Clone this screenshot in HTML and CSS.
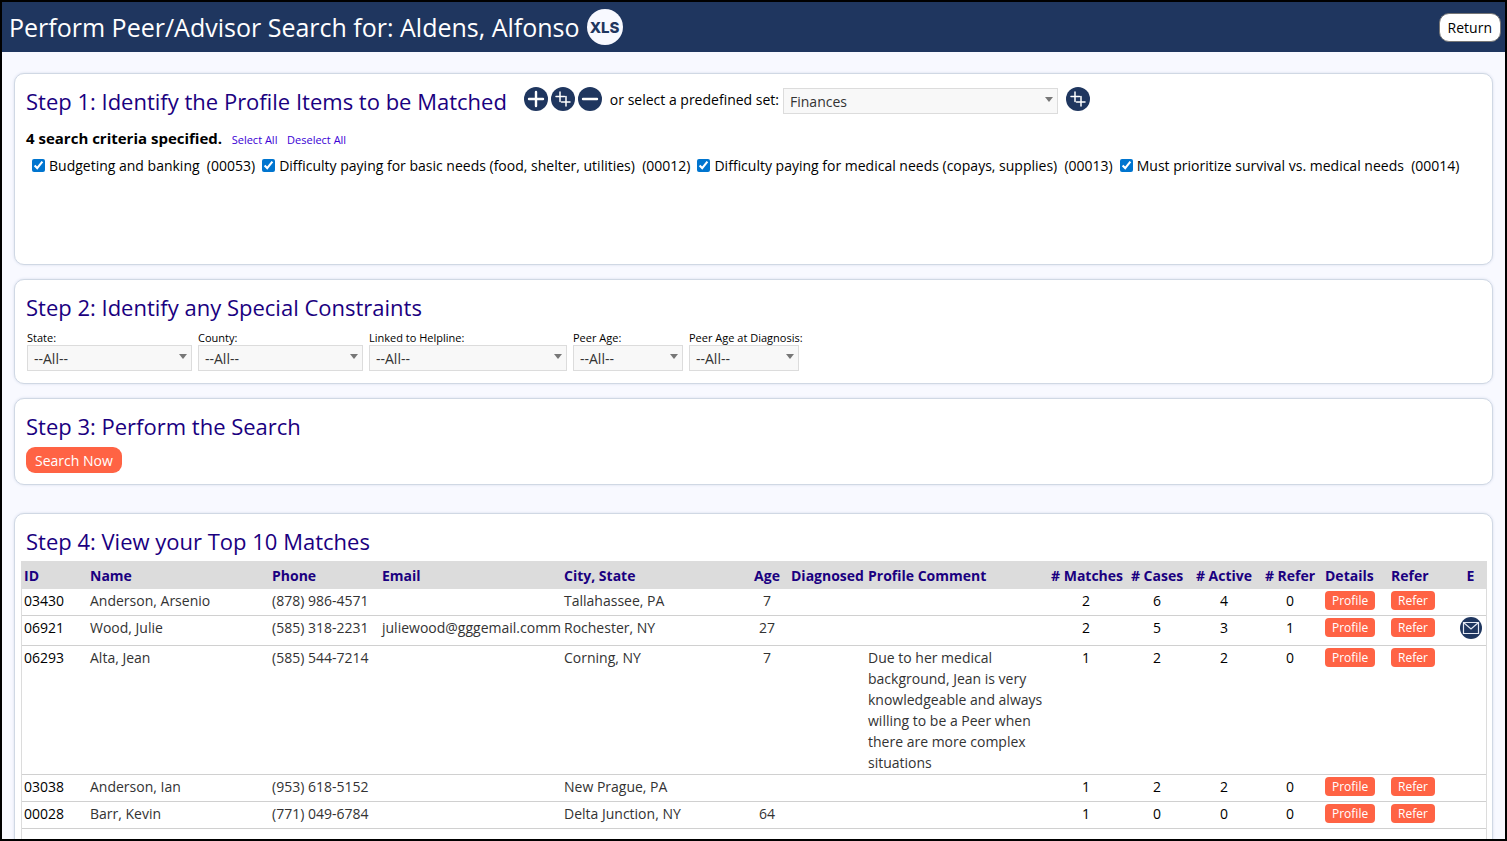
FILE: index.html
```
<!DOCTYPE html>
<html lang="en">

<head>
  <meta charset="UTF-8">
  <title>Perform Peer/Advisor Search</title>
  <link rel="stylesheet" href="styles.css">
</head>

<body>

  <!-- shared icons -->
  <svg class="sprite" aria-hidden="true">
    <symbol id="icon-plus" viewBox="0 0 24 24">
      <circle cx="12" cy="12" r="12" fill="#1f365f" />
      <path d="M12 5v14M5 12h14" stroke="#fff" stroke-width="2.4" stroke-linecap="round" />
    </symbol>
    <symbol id="icon-double" viewBox="0 0 24 24">
      <circle cx="12" cy="12" r="12" fill="#1f365f" />
      <path d="M9 5v9.500M5 9.500h8.500M15 9.500v9.500M10.500 15h8.500" stroke="#fff" stroke-width="1.5" stroke-linecap="round" />
    </symbol>
    <symbol id="icon-minus" viewBox="0 0 24 24">
      <circle cx="12" cy="12" r="12" fill="#1f365f" />
      <path d="M5 12h14" stroke="#fff" stroke-width="2.4" stroke-linecap="round" />
    </symbol>
    <symbol id="icon-mail" viewBox="0 0 22 22">
      <circle cx="11" cy="11" r="11" fill="#1f365f" />
      <path d="M3.500 5.500h15v11h-15zM3.500 5.500l7.500 6.500l7.500-6.500" stroke="#e4e8f2" stroke-width="1.2" fill="none" />
    </symbol>
  </svg>

  <div class="page">

    <header class="topbar">
      <h1>Perform Peer/Advisor Search for: Aldens, Alfonso</h1>
      <button class="xls" type="button">XLS</button>
      <button class="return" type="button">Return</button>
    </header>

    <main>

      <section class="card card-items">
        <div class="title-row">
          <h2>Step 1: Identify the Profile Items to be Matched</h2>
          <div class="icons">
            <button class="icon" type="button" aria-label="Add item"><svg><use href="#icon-plus" /></svg></button>
            <button class="icon" type="button" aria-label="Add several items"><svg><use href="#icon-double" /></svg></button>
            <button class="icon" type="button" aria-label="Remove items"><svg><use href="#icon-minus" /></svg></button>
          </div>
          <label for="predefined">or select a predefined set:</label>
          <span class="select set"><select id="predefined"><option>Finances</option></select></span>
          <button class="icon" type="button" aria-label="Add set"><svg><use href="#icon-double" /></svg></button>
        </div>
        <p class="criteria"><strong>4 search criteria specified.</strong> <a href="#">Select All</a> <a href="#">Deselect All</a></p>
        <div class="checks">
          <label><input type="checkbox" checked>Budgeting and banking&nbsp; (00053)</label>
          <label><input type="checkbox" checked>Difficulty paying for basic needs (food, shelter, utilities)&nbsp; (00012)</label>
          <label><input type="checkbox" checked>Difficulty paying for medical needs (copays, supplies)&nbsp; (00013)</label>
          <label><input type="checkbox" checked>Must prioritize survival vs. medical needs&nbsp; (00014)</label>
        </div>
      </section>

      <section class="card">
        <h2>Step 2: Identify any Special Constraints</h2>
        <div class="filters">
          <div class="filter medium">
            <label for="state">State:</label>
            <span class="select"><select id="state"><option>--All--</option></select></span>
          </div>
          <div class="filter medium">
            <label for="county">County:</label>
            <span class="select"><select id="county"><option>--All--</option></select></span>
          </div>
          <div class="filter wide">
            <label for="helpline">Linked to Helpline:</label>
            <span class="select"><select id="helpline"><option>--All--</option></select></span>
          </div>
          <div class="filter narrow">
            <label for="age">Peer Age:</label>
            <span class="select"><select id="age"><option>--All--</option></select></span>
          </div>
          <div class="filter narrow">
            <label for="ageDiagnosis">Peer Age at Diagnosis:</label>
            <span class="select"><select id="ageDiagnosis"><option>--All--</option></select></span>
          </div>
        </div>
      </section>

      <section class="card card-search">
        <h2>Step 3: Perform the Search</h2>
        <button class="search" type="button">Search Now</button>
      </section>

      <section class="card card-results">
        <h2>Step 4: View your Top 10 Matches</h2>
        <table class="results">
          <colgroup>
            <col class="c-id">
            <col class="c-name">
            <col class="c-phone">
            <col class="c-email">
            <col class="c-city">
            <col class="c-age">
            <col class="c-diag">
            <col class="c-comment">
            <col class="c-matches">
            <col class="c-cases">
            <col class="c-count">
            <col class="c-count">
            <col class="c-action">
            <col class="c-action">
            <col class="c-mail">
          </colgroup>
          <thead>
            <tr>
              <th>ID</th>
              <th>Name</th>
              <th>Phone</th>
              <th>Email</th>
              <th>City, State</th>
              <th class="num">Age</th>
              <th class="tight">Diagnosed</th>
              <th>Profile Comment</th>
              <th class="num"># Matches</th>
              <th class="num"># Cases</th>
              <th class="num"># Active</th>
              <th class="num"># Refer</th>
              <th>Details</th>
              <th>Refer</th>
              <th class="num">E</th>
            </tr>
          </thead>
          <tbody>
            <tr>
              <td class="dark">03430</td>
              <td>Anderson, Arsenio</td>
              <td>(878) 986-4571</td>
              <td></td>
              <td>Tallahassee, PA</td>
              <td class="num">7</td>
              <td></td>
              <td></td>
              <td class="num dark">2</td>
              <td class="num dark">6</td>
              <td class="num dark">4</td>
              <td class="num dark">0</td>
              <td><button class="small" type="button">Profile</button></td>
              <td><button class="small" type="button">Refer</button></td>
              <td></td>
            </tr>
            <tr class="has-mail">
              <td class="dark">06921</td>
              <td>Wood, Julie</td>
              <td>(585) 318-2231</td>
              <td class="email">juliewood@gggemail.comm</td>
              <td>Rochester, NY</td>
              <td class="num">27</td>
              <td></td>
              <td></td>
              <td class="num dark">2</td>
              <td class="num dark">5</td>
              <td class="num dark">3</td>
              <td class="num dark">1</td>
              <td><button class="small" type="button">Profile</button></td>
              <td><button class="small" type="button">Refer</button></td>
              <td class="num"><button class="icon mail" type="button" aria-label="Send email"><svg><use href="#icon-mail" /></svg></button></td>
            </tr>
            <tr>
              <td class="dark">06293</td>
              <td>Alta, Jean</td>
              <td>(585) 544-7214</td>
              <td></td>
              <td>Corning, NY</td>
              <td class="num">7</td>
              <td></td>
              <td>Due to her medical background, Jean is very knowledgeable and always willing to be a Peer when there are more complex situations</td>
              <td class="num dark">1</td>
              <td class="num dark">2</td>
              <td class="num dark">2</td>
              <td class="num dark">0</td>
              <td><button class="small" type="button">Profile</button></td>
              <td><button class="small" type="button">Refer</button></td>
              <td></td>
            </tr>
            <tr>
              <td class="dark">03038</td>
              <td>Anderson, Ian</td>
              <td>(953) 618-5152</td>
              <td></td>
              <td>New Prague, PA</td>
              <td class="num"></td>
              <td></td>
              <td></td>
              <td class="num dark">1</td>
              <td class="num dark">2</td>
              <td class="num dark">2</td>
              <td class="num dark">0</td>
              <td><button class="small" type="button">Profile</button></td>
              <td><button class="small" type="button">Refer</button></td>
              <td></td>
            </tr>
            <tr>
              <td class="dark">00028</td>
              <td>Barr, Kevin</td>
              <td>(771) 049-6784</td>
              <td></td>
              <td>Delta Junction, NY</td>
              <td class="num">64</td>
              <td></td>
              <td></td>
              <td class="num dark">1</td>
              <td class="num dark">0</td>
              <td class="num dark">0</td>
              <td class="num dark">0</td>
              <td><button class="small" type="button">Profile</button></td>
              <td><button class="small" type="button">Refer</button></td>
              <td></td>
            </tr>
            <tr>
              <td colspan="15"></td>
            </tr>
          </tbody>
        </table>
      </section>

    </main>

  </div>

</body>

</html>
```
FILE: styles.css
```
* {
  box-sizing: border-box;
}

body {
  margin: 0;
  font-family: "Open Sans", "Noto Sans", sans-serif;
  font-size: 14px;
  line-height: 21px;
  color: #000;
}

button,
select {
  font-family: inherit;
  font-size: 14px;
}

button {
  padding: 0;
  cursor: pointer;
}

.sprite {
  display: none;
}

.page {
  height: 100vh;
  overflow: hidden;
  border: 2px solid #000;
  background: #f8f9ff;
}

/* top bar */
.topbar {
  display: flex;
  align-items: center;
  gap: 7px;
  height: 50px;
  padding: 0 4px 0 7px;
  background: #1f365f;
}

.topbar h1 {
  margin: 0;
  font-size: 25px;
  font-weight: 400;
  line-height: 34px;
  color: #fff;
}

.xls {
  width: 36px;
  height: 36px;
  border: 0;
  border-radius: 50%;
  background: #f8f9ff;
  color: #1f365f;
  font-family: Inter, sans-serif;
  font-size: 15px;
  font-weight: 800;
}

.return {
  height: 29px;
  margin-left: auto;
  padding: 0 8px;
  border: 1px solid #767676;
  border-radius: 10px;
  background: #fff;
  color: #000;
}

/* step cards */
main {
  padding: 21px 12px;
}

.card {
  margin-bottom: 14px;
  padding: 11px 11px 12px;
  border: 1px solid #d0d8e4;
  border-radius: 10px;
  background: #fff;
  box-shadow: 0 0 3px #d8deec;
}

.card h2 {
  margin: 0;
  font-size: 22px;
  font-weight: 400;
  line-height: 32px;
  color: #1a0080;
}

.card-items {
  min-height: 192px;
}

.card-search {
  margin-bottom: 28px;
  padding-bottom: 11px;
}

.title-row {
  display: flex;
  align-items: center;
}

.icons {
  display: flex;
  gap: 3px;
  margin: 0 8px 4px 17px;
}

.icon {
  width: 24px;
  height: 24px;
  border: 0;
  background: none;
}

.icon svg {
  display: block;
  width: 100%;
  height: 100%;
}

.title-row label,
.title-row > .icon {
  margin-bottom: 4px;
}

.select {
  position: relative;
  display: block;
}

.select select {
  appearance: none;
  display: block;
  width: 100%;
  height: 26px;
  padding: 0 20px 0 6px;
  border: 1px solid #dcdcdc;
  border-radius: 0;
  background: #f8f8f8;
  color: #333;
}

/* drop-down arrow */
.select::after {
  content: "";
  position: absolute;
  top: 9px;
  right: 5px;
  border: 4px solid transparent;
  border-top: 5px solid #777;
  border-bottom: 0;
  pointer-events: none;
}

.set {
  width: 275px;
  margin: 0 8px 0 4px;
}

.criteria {
  margin: 11px 0 5px;
}

.criteria strong {
  font-size: 15px;
}

.criteria a {
  margin-left: 6px;
  font-size: 11px;
  color: #3a00d5;
  text-decoration: none;
}

.checks {
  display: flex;
  flex-wrap: wrap;
  gap: 0 7px;
  padding-left: 6px;
}

.checks label {
  display: flex;
  align-items: center;
  gap: 4px;
}

.checks input {
  width: 13px;
  height: 13px;
  margin: 0;
  accent-color: #0075cf;
}

.filters {
  display: flex;
  gap: 6px;
  margin-left: 1px;
}

.filter label {
  display: block;
  padding-top: 7px;
  font-size: 11px;
  line-height: 15px;
  white-space: nowrap;
}

.medium {
  width: 165px;
}

.wide {
  width: 198px;
}

.narrow {
  width: 110px;
}

.search {
  display: block;
  height: 26px;
  margin-top: 5px;
  padding: 0 9px;
  border: 0;
  border-radius: 9px;
  background: #ff6344;
  color: #fff;
}

/* matches table */
.card-results {
  padding: 11px 5px 12px 6px;
}

.card-results h2 {
  padding-left: 5px;
}

.results {
  width: 100%;
  margin-top: 4px;
  table-layout: fixed;
  border-collapse: separate;
  border-spacing: 0;
  border: 1px solid #dcdcdc;
  border-top: 0;
}

.results th {
  height: 28px;
  padding: 0 2px;
  background: #dcdcdc;
  color: #1a0080;
  text-align: left;
  white-space: nowrap;
}

.results .tight {
  padding: 0;
}

.results td {
  height: 27px;
  padding: 1px 2px;
  border-bottom: 1px solid #d0d0d0;
  color: #333;
  vertical-align: top;
}

.results .num {
  text-align: center;
}

.results .dark {
  color: #000;
}

.results .has-mail td {
  height: 30px;
}

.results .email {
  padding-right: 0;
  overflow: hidden;
  white-space: nowrap;
}

.small {
  display: block;
  height: 19px;
  margin-top: 1px;
  padding: 0 7px;
  border: 0;
  border-radius: 4px;
  background: #ff6344;
  color: #fff;
  font-size: 12px;
  line-height: 19px;
}

.mail {
  display: block;
  width: 22px;
  height: 22px;
  margin: 0 auto;
}

.c-id { width: 66px; }
.c-name { width: 182px; }
.c-phone { width: 110px; }
.c-email { width: 182px; }
.c-city { width: 181px; }
.c-age { width: 48px; }
.c-diag { width: 75px; }
.c-matches { width: 74px; }
.c-cases { width: 68px; }
.c-count { width: 66px; }
.c-action { width: 66px; }
.c-mail { width: 31px; }
```
